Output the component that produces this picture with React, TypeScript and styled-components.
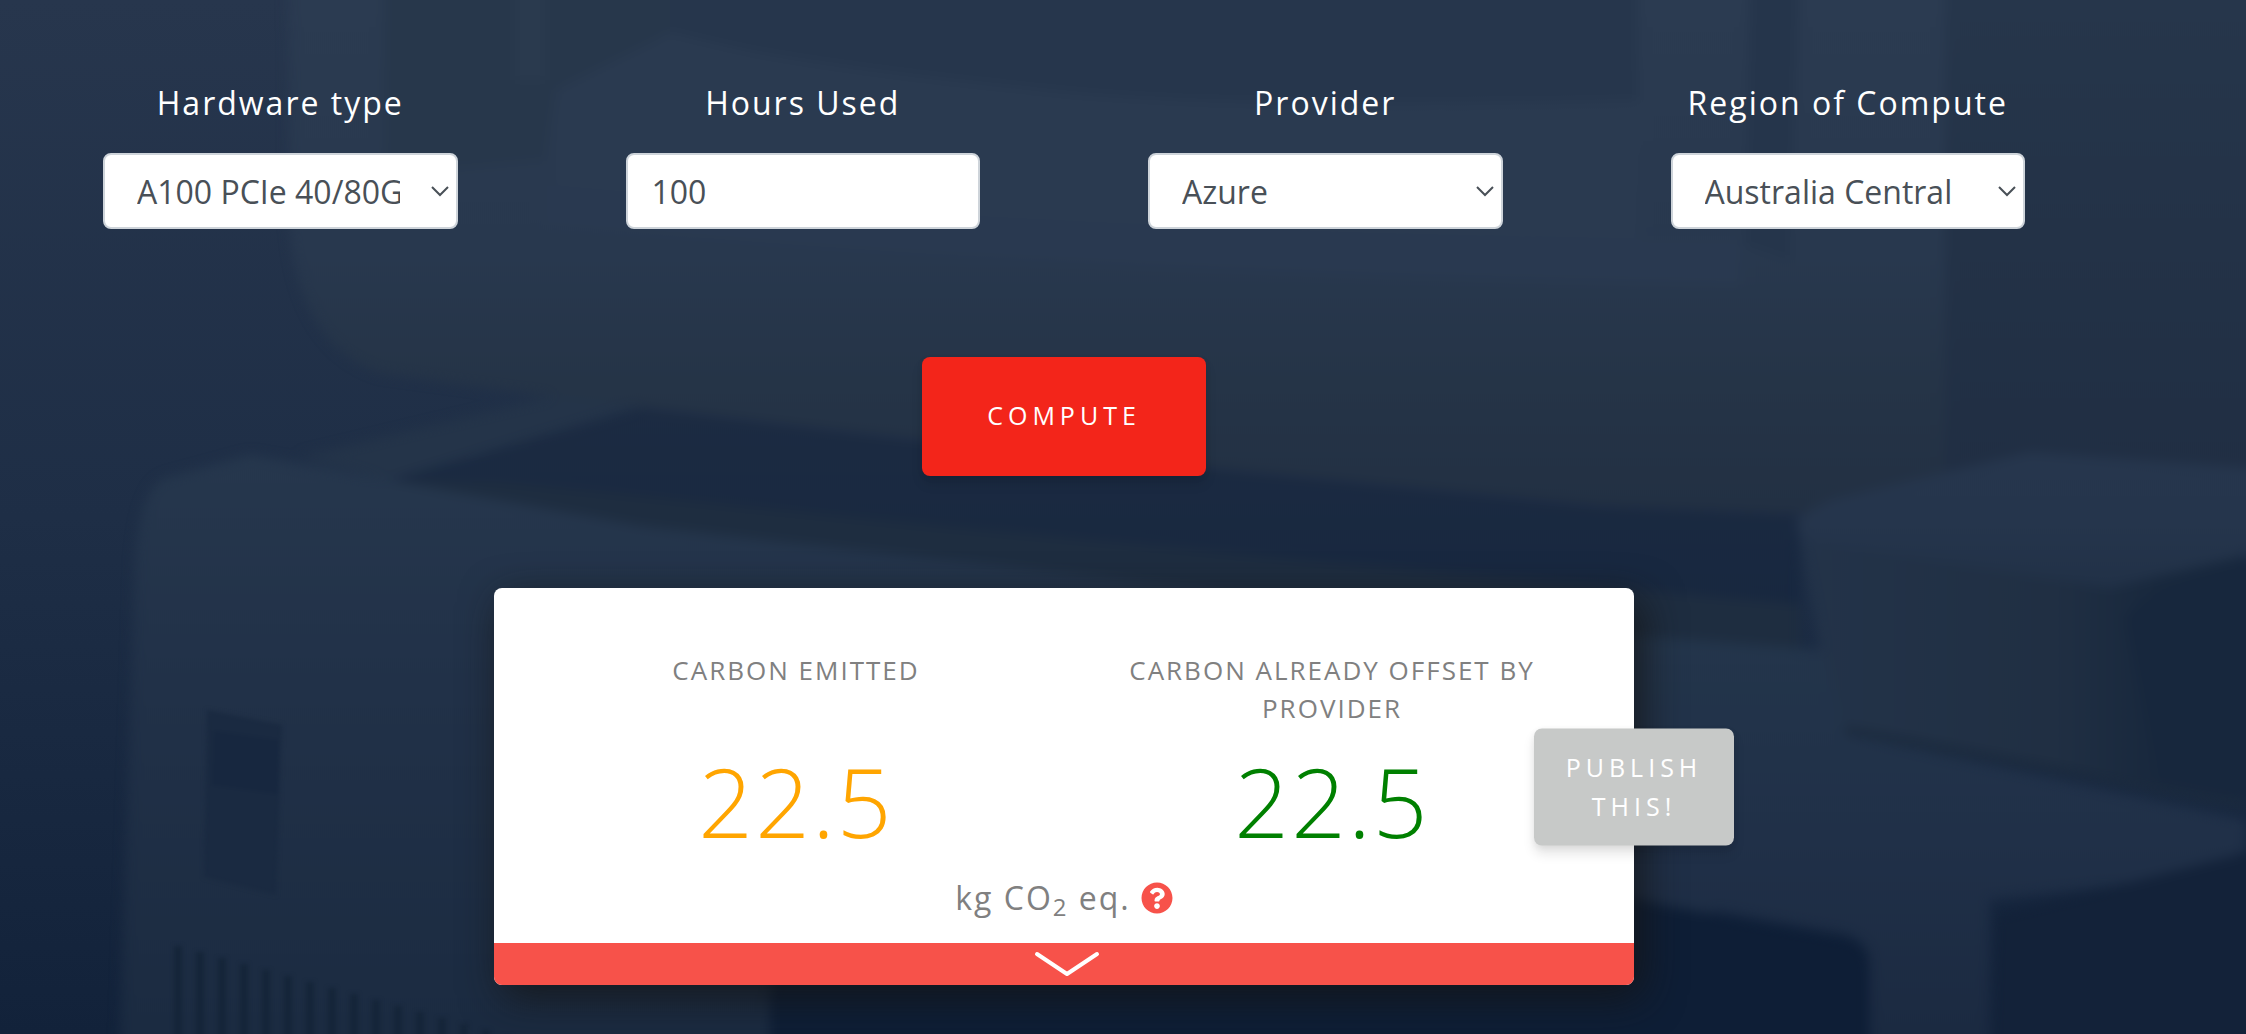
import React, { useState } from "react";
import styled, { createGlobalStyle } from "styled-components";
import { FaQuestionCircle } from "react-icons/fa";

const GlobalStyle = createGlobalStyle`
  *, *::before, *::after { box-sizing: border-box; }
  html, body, #root { min-height: 100%; }
  body {
    margin: 0;
    overflow-x: hidden;
    background: #1c2b43;
    font-family: "Open Sans", "Noto Sans", sans-serif;
  }
`;

const Page = styled.main`
  position: relative;
  isolation: isolate;
  overflow: hidden;
  min-height: 100vh;
  padding: 79px 137px 49px 19px;
  display: flex;
  flex-direction: column;
  align-items: center;
`;

const Backdrop = styled.svg`
  position: absolute;
  inset: 0;
  z-index: -1;
  width: 100%;
  height: 100%;
`;

const Form = styled.form`
  width: 100%;
  display: flex;
  flex-direction: column;
  align-items: center;
  gap: 128px;
`;

const Fields = styled.div`
  width: 100%;
  display: grid;
  grid-template-columns: repeat(4, minmax(0, 1fr));
`;

const Field = styled.div`
  display: flex;
  flex-direction: column;
  gap: 26px;
  padding: 0 84px;
`;

const FieldLabel = styled.label`
  color: #fff;
  font-size: 32px;
  font-weight: 500;
  line-height: 48px;
  letter-spacing: 2px;
  text-align: center;
  white-space: nowrap;
`;

const controlStyles = `
  width: 100%;
  height: 76px;
  border: 2px solid #ced4da;
  border-radius: 8px;
  background: #fff;
  color: #495057;
  font-family: inherit;
  font-size: 32px;
  line-height: 48px;
`;

const TextInput = styled.input`
  ${controlStyles}
  padding: 12px 24px;
`;

const SelectBox = styled.div`
  position: relative;
`;

const Select = styled.select`
  ${controlStyles}
  appearance: none;
  padding: 13px 56px 12px 32px;
`;

const SelectArrow = styled.svg`
  position: absolute;
  right: 9px;
  top: 32px;
  width: 18px;
  height: 12px;
  pointer-events: none;
`;

const ActionButton = styled.button`
  border: 0;
  border-radius: 8px;
  color: #fff;
  font-family: inherit;
  font-size: 25px;
  font-weight: 500;
  line-height: 39px;
  letter-spacing: 5px;
  text-transform: uppercase;
  cursor: pointer;
  box-shadow: 0 8px 12px rgba(0, 0, 0, 0.1), 0 2px 6px rgba(0, 0, 0, 0.06);
`;

const ComputeButton = styled(ActionButton)`
  background: #f3251a;
  padding: 39px 65px 41px;
`;

const PublishButton = styled(ActionButton)`
  position: absolute;
  top: 50%;
  right: 0;
  transform: translate(50%, -50%);
  width: 200px;
  padding: 19px 24px 20px;
  background: #c7c9c8;
`;

const Card = styled.section`
  position: relative;
  width: 100%;
  max-width: 1140px;
  margin-top: 112px;
  border-radius: 8px;
  background: #fff;
  color: #808080;
  box-shadow: 8px 12px 40px rgba(20, 20, 20, 0.8);
`;

const CardBody = styled.div`
  padding: 63px 34px 22px;
`;

const Results = styled.div`
  display: grid;
  grid-template-columns: repeat(2, minmax(0, 1fr));
`;

const Result = styled.div`
  display: flex;
  flex-direction: column;
  justify-content: space-between;
  text-align: center;
`;

const ResultLabel = styled.h2`
  margin: 0;
  font-size: 26px;
  font-weight: 400;
  line-height: 38px;
  letter-spacing: 2px;
  text-transform: uppercase;
`;

const ResultValue = styled.output<{ $tone: string }>`
  color: ${(p) => p.$tone};
  font-size: 96px;
  font-weight: 300;
  line-height: 148px;
  letter-spacing: 2px;
`;

const Unit = styled.p`
  margin: 0;
  display: flex;
  justify-content: center;
  align-items: center;
  gap: 10px;
  font-size: 32px;
  line-height: 46px;
  letter-spacing: 2px;

  sub {
    font-size: 24px;
    line-height: 0;
    vertical-align: -6px;
  }
`;

const HelpButton = styled.button`
  display: flex;
  padding: 0;
  border: 0;
  background: none;
  color: #f7524a;
  font-size: 32px;
  cursor: pointer;
`;

const ExpandButton = styled.button`
  display: flex;
  justify-content: center;
  align-items: center;
  width: 100%;
  height: 42px;
  padding: 0;
  border: 0;
  border-radius: 0 0 8px 8px;
  background: #f7524a;
  cursor: pointer;
`;

function MachineBackdrop() {
  const slots = Array.from({ length: 17 }, (_, i) => i);
  return (
    <Backdrop viewBox="0 0 2246 1034" preserveAspectRatio="none" aria-hidden="true">
      <defs>
        <linearGradient id="wall" x1="0" y1="0" x2="0" y2="1">
          <stop offset="0" stopColor="#27364d" />
          <stop offset="0.5" stopColor="#1e2e46" />
          <stop offset="1" stopColor="#12223a" />
        </linearGradient>
        <linearGradient id="pillar" gradientUnits="userSpaceOnUse" x1="0" y1="0" x2="0" y2="480">
          <stop offset="0" stopColor="#26364b" />
          <stop offset="1" stopColor="#202e43" />
        </linearGradient>
        <linearGradient id="screen" gradientUnits="userSpaceOnUse" x1="0" y1="0" x2="0" y2="510">
          <stop offset="0" stopColor="#2b3b51" />
          <stop offset="0.5" stopColor="#28384e" />
          <stop offset="0.75" stopColor="#253447" />
          <stop offset="1" stopColor="#223043" />
        </linearGradient>
        <linearGradient id="case" gradientUnits="userSpaceOnUse" x1="0" y1="455" x2="0" y2="1034">
          <stop offset="0" stopColor="#26374d" />
          <stop offset="0.4" stopColor="#213148" />
          <stop offset="1" stopColor="#1b2b41" />
        </linearGradient>
        <linearGradient id="hole" gradientUnits="userSpaceOnUse" x1="0" y1="400" x2="0" y2="620">
          <stop offset="0" stopColor="#1c2b42" />
          <stop offset="1" stopColor="#17273f" />
        </linearGradient>
        <linearGradient id="boxFace" gradientUnits="userSpaceOnUse" x1="1800" y1="0" x2="2160" y2="0">
          <stop offset="0" stopColor="#233349" />
          <stop offset="0.7" stopColor="#202f43" />
          <stop offset="1" stopColor="#18283d" />
        </linearGradient>
        <linearGradient id="boxTop" gradientUnits="userSpaceOnUse" x1="0" y1="455" x2="0" y2="590">
          <stop offset="0" stopColor="#26364d" />
          <stop offset="0.5" stopColor="#25354c" />
          <stop offset="1" stopColor="#213147" />
        </linearGradient>
        <linearGradient id="shelf" gradientUnits="userSpaceOnUse" x1="0" y1="640" x2="0" y2="1034">
          <stop offset="0" stopColor="#23354b" />
          <stop offset="0.5" stopColor="#203048" />
          <stop offset="1" stopColor="#1b2a41" />
        </linearGradient>
        <filter id="soft" x="-5%" y="-5%" width="110%" height="110%" colorInterpolationFilters="sRGB">
          <feGaussianBlur stdDeviation="6" />
        </filter>
        <filter id="fine" x="-5%" y="-5%" width="110%" height="110%" colorInterpolationFilters="sRGB">
          <feGaussianBlur stdDeviation="2" />
        </filter>
      </defs>
      <rect width="2246" height="1034" fill="url(#wall)" />
      <g filter="url(#soft)">
        <path d="M288-30H1960V500L1800 515L1600 507L920 441L640 408L540 395L380 373Q300 345 290 230Z" fill="url(#screen)" />
        <path d="M384-30H670V33L556 90L545 160L384 175Z" fill="#27374b" />
        <path d="M515-30H545V80H515Z" fill="#2a3a4e" />
        <path d="M670-30H1638V100Q1200 110 1030 88Q820 68 670 35Z" fill="#26364c" />
        <path d="M556 100L670 32Q860 80 1030 90Q1300 112 1638 106V240Q1100 240 556 190Z" fill="#2a3a50" />
        <path d="M545 185Q1100 235 1740 240V285Q1100 275 545 225Z" fill="#293950" />
        <path d="M1750-30H1800L1790 260L1745 245Z" fill="#25354b" />
        <path d="M1945-30H2276V490H1945Z" fill="url(#pillar)" />
        <path d="M640 408L920 441L1600 507L1800 515V625L1640 608L920 545L640 520L390 480Z" fill="url(#hole)" />
        <path d="M390 480L500 482L920 524L1640 590L1800 604V660H920L520 520Z" fill="#1e2d40" />
        <path d="M300 457L555 396L640 406L390 480Z" fill="#243449" />
        <path d="M135 560Q140 488 165 478L250 455L390 480L640 526L780 542L1640 636L1820 650L1850 735L1700 930L770 960V1100H118Z" fill="url(#case)" />
        <path d="M1630 636L1820 650L1850 735L2246 820V870L1990 900V1100H1870V960Q1868 938 1840 932L1630 895Z" fill="url(#shelf)" />
        <path d="M1797 518L2110 580L2246 550V800L2130 785L1845 732L1820 650Z" fill="url(#boxFace)" />
        <path d="M1797 518L1830 500L2030 452L2276 470V548L2110 588L1800 540Z" fill="url(#boxTop)" />
        <path d="M2125 620Q2140 585 2276 555V800L2160 790Z" fill="#17273d" />
        <path d="M1845 730L2130 783L2246 805" fill="none" stroke="#1c2b3e" strokeWidth="8" />
        <path d="M770 1000L780 960L1600 890L1660 905L1845 938Q1868 944 1868 970V1100H770Z" fill="#0e1e36" />
        <path d="M1995 915L2120 885L2276 845V1100H1990Z" fill="#132239" />
      </g>
      <g filter="url(#fine)">
        <path d="M207 710L282 725L276 895L204 877Z" fill="#1a2a41" />
        <path d="M214 731L278 740V794L212 785Z" fill="#17273f" />
        {slots.map((i) => (
          <path key={i} d={`M${178 + i * 22} ${946 + i * 6}v150`} stroke="#152539" strokeWidth="8" />
        ))}
      </g>
    </Backdrop>
  );
}

interface SelectFieldProps {
  id: string;
  label: string;
  options: string[];
}

function SelectField({ id, label, options }: SelectFieldProps) {
  return (
    <Field>
      <FieldLabel htmlFor={id}>{label}</FieldLabel>
      <SelectBox>
        <Select id={id} defaultValue={options[0]}>
          {options.map((option) => (
            <option key={option}>{option}</option>
          ))}
        </Select>
        <SelectArrow viewBox="0 0 18 12" fill="none" stroke="#495057" strokeWidth="2" aria-hidden="true">
          <path d="M1 2L9 10L17 2" />
        </SelectArrow>
      </SelectBox>
    </Field>
  );
}

export default function App() {
  const [hours, setHours] = useState("100");

  return (
    <>
      <GlobalStyle />
      <Page>
        <MachineBackdrop />
        <Form onSubmit={(event) => event.preventDefault()}>
          <Fields>
            <SelectField id="hardware" label="Hardware type" options={["A100 PCIe 40/80GB"]} />
            <Field>
              <FieldLabel htmlFor="hours">Hours Used</FieldLabel>
              <TextInput id="hours" value={hours} onChange={(event) => setHours(event.target.value)} />
            </Field>
            <SelectField id="provider" label="Provider" options={["Azure"]} />
            <SelectField id="region" label="Region of Compute" options={["Australia Central"]} />
          </Fields>
          <ComputeButton type="submit">Compute</ComputeButton>
        </Form>
        <Card>
          <CardBody>
            <Results>
              <Result>
                <ResultLabel>Carbon emitted</ResultLabel>
                <ResultValue $tone="#ffa500">22.5</ResultValue>
              </Result>
              <Result>
                <ResultLabel>Carbon already offset by provider</ResultLabel>
                <ResultValue $tone="#008000">22.5</ResultValue>
              </Result>
            </Results>
            <Unit>
              <span>
                kg CO<sub>2</sub> eq.
              </span>
              <HelpButton type="button" aria-label="What does this mean?">
                <FaQuestionCircle />
              </HelpButton>
            </Unit>
          </CardBody>
          <ExpandButton type="button" aria-label="Show details">
            <svg width="72" height="28" viewBox="0 0 72 28" fill="none" stroke="#fff" strokeWidth="4" strokeLinecap="round" strokeLinejoin="round" aria-hidden="true">
              <path d="M9 4L39 24L69 4" />
            </svg>
          </ExpandButton>
          <PublishButton type="button">Publish this!</PublishButton>
        </Card>
      </Page>
    </>
  );
}
